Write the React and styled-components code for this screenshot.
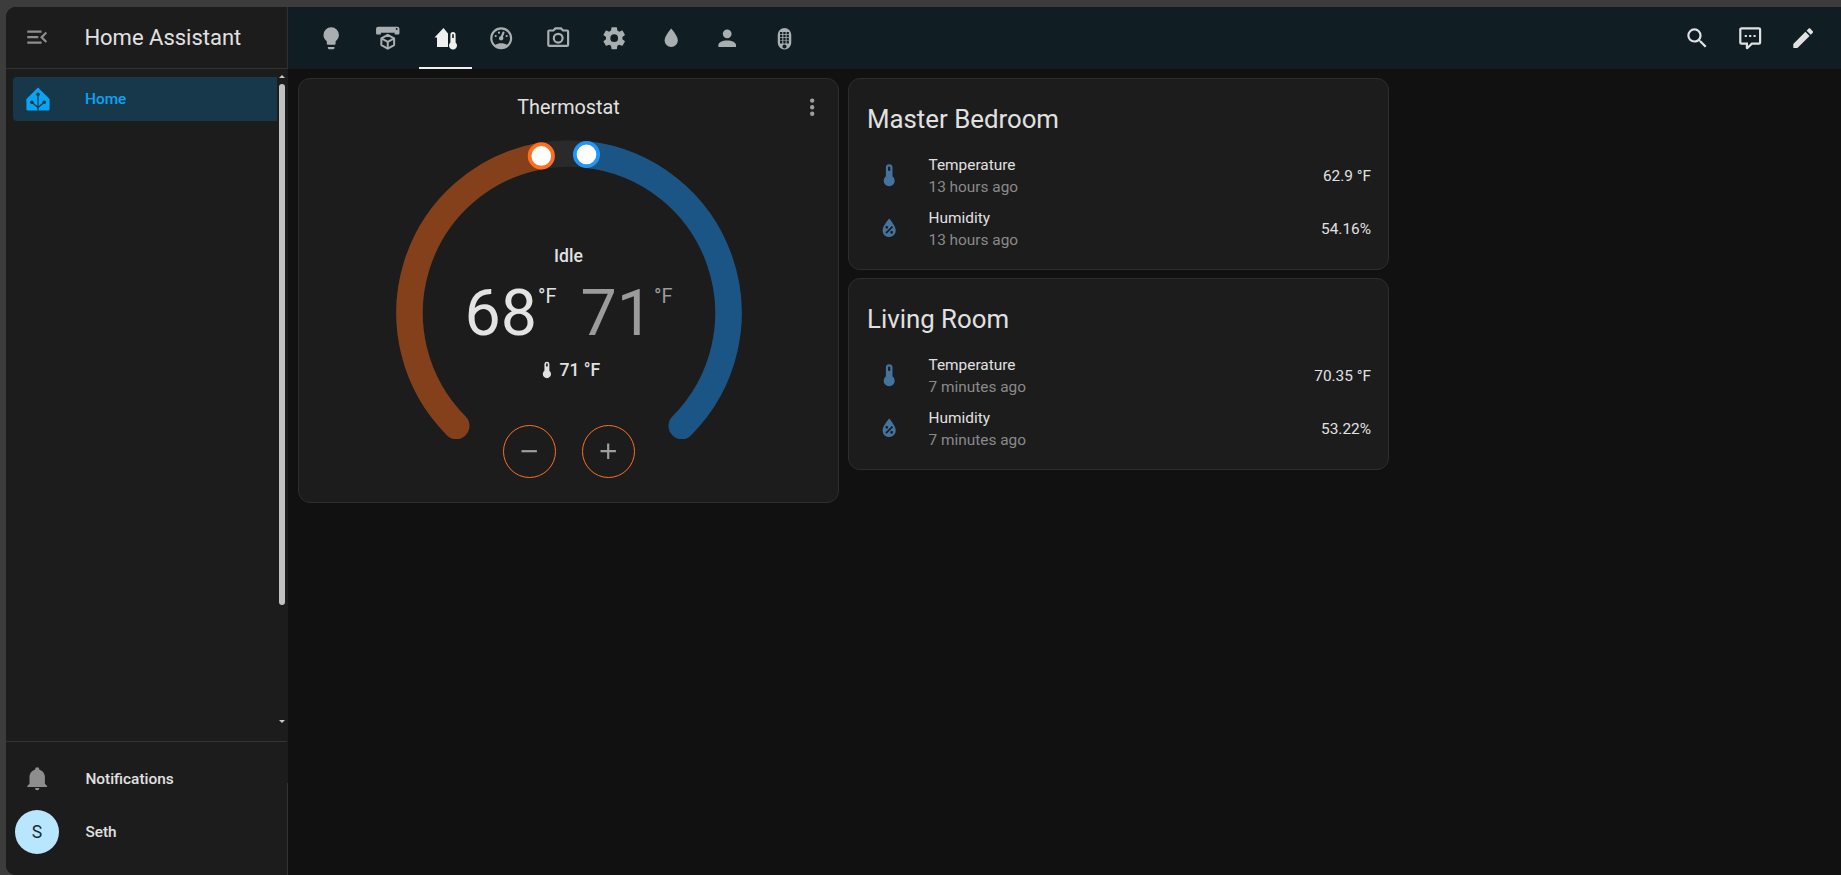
import React from "react";
import styled, { createGlobalStyle } from "styled-components";

const P = {
  lightbulb: "M12,2A7,7 0 0,0 5,9C5,11.38 6.19,13.47 8,14.74V17A1,1 0 0,0 9,18H15A1,1 0 0,0 16,17V14.74C17.81,13.47 19,11.38 19,9A7,7 0 0,0 12,2M9,21A1,1 0 0,0 10,22H14A1,1 0 0,0 15,21V20H9V21Z",
  gauge: "M12,2A10,10 0 0,0 2,12A10,10 0 0,0 12,22A10,10 0 0,0 22,12A10,10 0 0,0 12,2M12,4A8,8 0 0,1 20,12C20,14.4 19,16.5 17.3,18C16,17.2 14.1,16.6 12,16.6C9.9,16.6 8,17.2 6.7,18C5,16.5 4,14.4 4,12A8,8 0 0,1 12,4M14,5.89C13.62,5.9 13.26,6.15 13.1,6.54L11.81,9.77L11.71,10C11,10.13 10.41,10.6 10.14,11.26C9.73,12.29 10.23,13.45 11.26,13.86C12.29,14.27 13.45,13.77 13.86,12.74C14.12,12.08 14,11.32 13.57,10.76L13.67,10.5L14.96,7.29L14.97,7.26C15.17,6.75 14.92,6.17 14.41,5.96C14.28,5.91 14.15,5.89 14,5.89M10,6A1,1 0 0,0 9,7A1,1 0 0,0 10,8A1,1 0 0,0 11,7A1,1 0 0,0 10,6M7,9A1,1 0 0,0 6,10A1,1 0 0,0 7,11A1,1 0 0,0 8,10A1,1 0 0,0 7,9M17,9A1,1 0 0,0 16,10A1,1 0 0,0 17,11A1,1 0 0,0 18,10A1,1 0 0,0 17,9Z",
  camera: "M20,4H16.83L15,2H9L7.17,4H4A2,2 0 0,0 2,6V18A2,2 0 0,0 4,20H20A2,2 0 0,0 22,18V6A2,2 0 0,0 20,4M20,18H4V6H8.05L9.88,4H14.12L15.95,6H20V18M12,7A5,5 0 0,0 7,12A5,5 0 0,0 12,17A5,5 0 0,0 17,12A5,5 0 0,0 12,7M12,15A3,3 0 0,1 9,12A3,3 0 0,1 12,9A3,3 0 0,1 15,12A3,3 0 0,1 12,15Z",
  cog: "M12,15.5A3.5,3.5 0 0,1 8.5,12A3.5,3.5 0 0,1 12,8.5A3.5,3.5 0 0,1 15.5,12A3.5,3.5 0 0,1 12,15.5M19.43,12.97C19.47,12.65 19.5,12.33 19.5,12C19.5,11.67 19.47,11.34 19.43,11L21.54,9.37C21.73,9.22 21.78,8.95 21.66,8.73L19.66,5.27C19.54,5.05 19.27,4.96 19.05,5.05L16.56,6.05C16.04,5.66 15.5,5.32 14.87,5.07L14.5,2.42C14.46,2.18 14.25,2 14,2H10C9.75,2 9.54,2.18 9.5,2.42L9.13,5.07C8.5,5.32 7.96,5.66 7.44,6.05L4.95,5.05C4.73,4.96 4.46,5.05 4.34,5.27L2.34,8.73C2.21,8.95 2.27,9.22 2.46,9.37L4.57,11C4.53,11.34 4.5,11.67 4.5,12C4.5,12.33 4.53,12.65 4.57,12.97L2.46,14.63C2.27,14.78 2.21,15.05 2.34,15.27L4.34,18.73C4.46,18.95 4.73,19.03 4.95,18.95L7.44,17.94C7.96,18.34 8.5,18.68 9.13,18.93L9.5,21.58C9.54,21.82 9.75,22 10,22H14C14.25,22 14.46,21.82 14.5,21.58L14.87,18.93C15.5,18.67 16.04,18.34 16.56,17.94L19.05,18.95C19.27,19.03 19.54,18.95 19.66,18.73L21.66,15.27C21.78,15.05 21.73,14.78 21.54,14.63L19.43,12.97Z",
  water: "M12,20A6,6 0 0,1 6,14C6,10 12,3.25 12,3.25C12,3.25 18,10 18,14A6,6 0 0,1 12,20Z",
  account: "M12,4A4,4 0 0,1 16,8A4,4 0 0,1 12,12A4,4 0 0,1 8,8A4,4 0 0,1 12,4M12,14C16.42,14 20,15.79 20,18V20H4V18C4,15.79 7.58,14 12,14Z",
  magnify: "M9.5,3A6.5,6.5 0 0,1 16,9.5C16,11.11 15.41,12.59 14.44,13.73L14.71,14H15.5L20.5,19L19,20.5L14,15.5V14.71L13.73,14.44C12.59,15.41 11.11,16 9.5,16A6.5,6.5 0 0,1 3,9.5A6.5,6.5 0 0,1 9.5,3M9.5,5C7,5 5,7 5,9.5C5,12 7,14 9.5,14C12,14 14,12 14,9.5C14,7 12,5 9.5,5Z",
  comment: "M9,22A1,1 0 0,1 8,21V18H4A2,2 0 0,1 2,16V4C2,2.89 2.9,2 4,2H20A2,2 0 0,1 22,4V16A2,2 0 0,1 20,18H13.9L10.2,21.71C10,21.9 9.75,22 9.5,22V22H9M10,16V19.08L13.08,16H20V4H4V16H10M17,11H15V9H17V11M13,11H11V9H13V11M9,11H7V9H9V11Z",
  pencil: "M20.71,7.04C21.1,6.65 21.1,6 20.71,5.63L18.37,3.29C18,2.9 17.35,2.9 16.96,3.29L15.12,5.12L18.87,8.87M3,17.25V21H6.75L17.81,9.93L14.06,6.18L3,17.25Z",
  menuOpen: "M21,15.61L19.59,17L14.58,12L19.59,7L21,8.39L17.44,12L21,15.61M3,6H16V8H3V6M3,13V11H13V13H3M3,18V16H16V18H3Z",
  bell: "M21,19V20H3V19L5,17V11C5,7.9 7.03,5.17 10,4.29C10,4.19 10,4.1 10,4A2,2 0 0,1 12,2A2,2 0 0,1 14,4C14,4.1 14,4.19 14,4.29C16.97,5.17 19,7.9 19,11V17L21,19M14,21A2,2 0 0,1 12,23A2,2 0 0,1 10,21",
  thermometer: "M15 13V5A3 3 0 0 0 9 5V13A5 5 0 1 0 15 13M12 4A1 1 0 0 1 13 5V8H11V5A1 1 0 0 1 12 4Z",
  waterPercent: "M12,3.25C12,3.25 6,10 6,14C6,17.32 8.69,20 12,20A6,6 0 0,0 18,14C18,10 12,3.25 12,3.25M14.47,9.97L15.53,11.03L9.53,17.03L8.47,15.97M9.75,10A1.25,1.25 0 0,1 11,11.25A1.25,1.25 0 0,1 9.75,12.5A1.25,1.25 0 0,1 8.5,11.25A1.25,1.25 0 0,1 9.75,10M14.25,14.5A1.25,1.25 0 0,1 15.5,15.75A1.25,1.25 0 0,1 14.25,17A1.25,1.25 0 0,1 13,15.75A1.25,1.25 0 0,1 14.25,14.5Z",
  dots: "M12,16A2,2 0 0,1 14,18A2,2 0 0,1 12,20A2,2 0 0,1 10,18A2,2 0 0,1 12,16M12,10A2,2 0 0,1 14,12A2,2 0 0,1 12,14A2,2 0 0,1 10,12A2,2 0 0,1 12,10M12,4A2,2 0 0,1 14,6A2,2 0 0,1 12,8A2,2 0 0,1 10,6A2,2 0 0,1 12,4Z",
  minus: "M19,13H5V11H19V13Z",
  plus: "M19,13H13V19H11V13H5V11H11V5H13V11H19V13Z",
  homeThermo: "M10.5,2L1.5,11.5H4V21H15V7.5ZM20,6A2.6,2.6 0 0,0 17.4,8.6V16.4A4,4 0 1,0 22.6,16.4V8.6A2.6,2.6 0 0,0 20,6ZM20,8A.8.8 0 0,1 20.8,8.8V12H19.2V8.8A.8.8 0 0,1 20,8Z",
};

const holes = [];
for (let r = 0; r < 4; r++) {
  for (let c = 0; c < 3; c++) {
    const x = 7.7 + c * 3.15;
    const y = 5.8 + r * 2.9;
    holes.push(`M${x.toFixed(2)},${y.toFixed(2)}h2.2v2.2h-2.2Z`);
  }
}
const remotePath =
  "M12,2A6.5,6.5 0 0,1 18.5,8.5V16A6.5,6.5 0 0,1 5.5,16V8.5A6.5,6.5 0 0,1 12,2Z" +
  holes.join("") +
  "M12,17.7A2,2 0 1,0 12,21.7A2,2 0 1,0 12,17.7Z";

const GlobalStyle = createGlobalStyle`
  html, body { margin: 0; height: 100%; background: #3c3c3c; }
  body { font-family: Roboto, "Noto Sans", sans-serif; }
  * { box-sizing: border-box; }
`;

const Screen = styled.div`
  height: 875px;
  width: 1841px;
  padding: 7px 0 0 6px;
  overflow: hidden;
`;
const Shell = styled.div`
  display: flex;
  height: 100%;
  background: #111111;
  border-radius: 10px 0 0 10px;
  overflow: hidden;
`;
const Sidebar = styled.aside`
  width: 281px;
  flex: none;
  display: flex;
  flex-direction: column;
  background: #1c1c1c;
`;
const Edge = styled.div`
  width: 1px;
  flex: none;
  background: linear-gradient(
    to bottom,
    #2f2f2f 0,
    #2f2f2f 62px,
    #1c1c1c 62px,
    #1c1c1c 776px,
    #333333 776px
  );
`;
const BrandBar = styled.div`
  height: 62px;
  flex: none;
  display: flex;
  align-items: center;
  padding-left: 18.4px;
  border-bottom: 1px solid #333333;
`;
const BrandTitle = styled.div`
  margin-left: 33.6px;
  font-size: 22px;
  color: #e1e1e1;
`;
const NavArea = styled.div`
  flex: 1;
  display: flex;
  min-height: 0;
`;
const NavList = styled.nav`
  flex: 1;
  padding: 8px 0 0 7px;
`;
const NavItem = styled.div`
  height: 44px;
  display: flex;
  align-items: center;
  padding-left: 12.5px;
  background: #17384a;
  border-radius: 4px 0 0 4px;
  color: #0aa4f4;
  font-size: 15.4px;
  font-weight: 500;
`;
const NavLabel = styled.span`
  margin-left: 35.5px;
`;
const ScrollTrack = styled.div`
  width: 10px;
  flex: none;
  display: flex;
  flex-direction: column;
  align-items: center;
  padding-top: 6px;
`;
const ScrollUp = styled.div`
  width: 0;
  height: 0;
  border-left: 3px solid transparent;
  border-right: 3px solid transparent;
  border-bottom: 3px solid #c8c8c8;
`;
const ScrollDown = styled.div`
  width: 0;
  height: 0;
  border-left: 3px solid transparent;
  border-right: 3px solid transparent;
  border-top: 3px solid #c8c8c8;
  margin-top: 115px;
`;
const ScrollThumb = styled.div`
  width: 6px;
  height: 521px;
  margin-top: 6px;
  background: #c1c1c1;
  border-radius: 3px;
`;
const Footer = styled.div`
  flex: none;
  border-top: 1px solid #333333;
  padding-top: 10px;
  height: 134px;
`;
const FooterRow = styled.div`
  height: 53px;
  display: flex;
  align-items: center;
  padding-left: ${(p) => p.$pad}px;
  font-size: 15.4px;
  font-weight: 500;
  color: #e1e1e1;
`;
const FooterLabel = styled.span`
  margin-left: ${(p) => p.$gap}px;
`;
const Avatar = styled.div`
  width: 44px;
  height: 44px;
  border-radius: 50%;
  background: #b9e6ff;
  color: #1c2a33;
  font-size: 17.6px;
  font-weight: 400;
  display: flex;
  align-items: center;
  justify-content: center;
`;
const Main = styled.main`
  flex: 1;
  min-width: 0;
  display: flex;
  flex-direction: column;
`;
const TopBar = styled.header`
  height: 62px;
  flex: none;
  display: flex;
  justify-content: space-between;
  background: #101e24;
`;
const Tabs = styled.div`
  display: flex;
  padding-left: 15.2px;
`;
const Tab = styled.div`
  width: 56.6px;
  display: flex;
  align-items: center;
  justify-content: center;
  position: relative;
  color: ${(p) => (p.$active ? "#f0f0f0" : "#a9aeb0")};
  ${(p) =>
    p.$active
      ? `&::after { content: ""; position: absolute; left: 3px; right: 1px; bottom: 0; height: 2px; background: #f0f0f0; }`
      : ""}
`;
const Actions = styled.div`
  display: flex;
  align-items: center;
  gap: 26.6px;
  padding-right: 24.5px;
  color: #e1e1e1;
`;
const Board = styled.div`
  display: grid;
  grid-template-columns: 541px 541px;
  column-gap: 9px;
  padding: 9px 0 0 10px;
  align-items: start;
`;
const Stack = styled.div`
  display: flex;
  flex-direction: column;
  gap: 8px;
`;
const Card = styled.section`
  background: #1c1c1c;
  border: 1px solid #2e2e2e;
  border-radius: 12px;
  position: relative;
`;
const ThermoCard = styled(Card)`
  height: 425px;
  display: flex;
  flex-direction: column;
  align-items: center;
`;
const ThermoTitle = styled.div`
  height: 54px;
  flex: none;
  font-size: 19.8px;
  line-height: 54px;
  padding-top: 2px;
  color: #e1e1e1;
`;
const MenuButton = styled.div`
  position: absolute;
  top: 15px;
  right: 13px;
  color: #9e9e9e;
  display: flex;
`;
const Dial = styled.div`
  position: relative;
  width: 360px;
  height: 360px;
  flex: none;
`;
const DialCenter = styled.div`
  position: absolute;
  left: 0;
  right: 0;
  top: 111px;
  display: flex;
  flex-direction: column;
  align-items: center;
  color: #e1e1e1;
`;
const Mode = styled.div`
  font-size: 17.6px;
  font-weight: 500;
  line-height: 24px;
`;
const Temps = styled.div`
  display: flex;
  gap: 24px;
  margin-top: 8px;
  height: 74px;
`;
const Temp = styled.div`
  display: flex;
  align-items: flex-start;
  color: ${(p) => p.$color};
`;
const TempValue = styled.span`
  font-size: 64.5px;
  font-weight: 400;
  line-height: 74px;
`;
const TempUnit = styled.span`
  font-size: 20px;
  font-weight: 400;
  line-height: 20px;
  margin-top: 10px;
  margin-left: 1px;
`;
const Current = styled.div`
  display: flex;
  align-items: center;
  gap: 3px;
  font-size: 17.6px;
  font-weight: 500;
  line-height: 24px;
  margin-top: 8px;
`;
const DialButtons = styled.div`
  position: absolute;
  left: 0;
  right: 0;
  top: 291.5px;
  display: flex;
  justify-content: center;
  gap: 26px;
`;
const RoundButton = styled.div`
  width: 53px;
  height: 53px;
  border: 1px solid #ff6f22;
  border-radius: 50%;
  display: flex;
  align-items: center;
  justify-content: center;
  color: #9e9e9e;
`;
const EntityCard = styled(Card)`
  height: 192px;
  padding: 0 17px 0 15px;
`;
const EntityTitle = styled.h2`
  margin: 0;
  font-size: 25.8px;
  font-weight: 400;
  color: #e1e1e1;
  line-height: 32px;
  padding: 24px 0 0 3px;
  height: 63px;
`;
const Row = styled.div`
  height: 53px;
  display: flex;
  align-items: center;
  margin-top: ${(p) => (p.$first ? "7px" : "0")};
`;
const Badge = styled.div`
  width: 50px;
  flex: none;
  display: flex;
  justify-content: center;
  color: #44739e;
`;
const RowInfo = styled.div`
  flex: 1;
  margin-left: 14.5px;
  font-size: 15.4px;
  line-height: 22px;
  color: #e1e1e1;
`;
const RowSub = styled.div`
  color: #8a8a8a;
`;
const RowValue = styled.div`
  font-size: 15.4px;
  color: #e1e1e1;
`;

const Icon = ({ d, size = 26.4, color = "currentColor" }) => (
  <svg width={size} height={size} viewBox="0 0 24 24" fill={color} fillRule="evenodd" style={{ display: "block" }}>
    <path d={d} />
  </svg>
);

const PrinterIcon = () => (
  <svg width="25.5" height="25.5" viewBox="0 0 24 24" fill="currentColor" fillRule="evenodd" style={{ display: "block" }}>
    <path d="M3,1.6H21A2,2 0 0,1 23,3.6V8A1,1 0 0,1 22,9H18.5V7.2H5.5V9H2A1,1 0 0,1 1,8V3.6A2,2 0 0,1 3,1.6ZM20.4,2.9A.9.9 0 1,0 20.4,4.7A.9.9 0 1,0 20.4,2.9Z" />
    <g fill="none" stroke="currentColor" strokeWidth="1.9" strokeLinejoin="round">
      <path d="M12,9.2L18,12.6V18.9L12,22.3L6,18.9V12.6Z" />
      <path d="M6.4,12.9L12,15.8L17.6,12.9M12,15.8V22" />
    </g>
  </svg>
);

const HaLogo = () => (
  <svg width="24" height="24" viewBox="0 0 24 24" style={{ display: "block" }}>
    <path fill="#0aa4f4" d="M12,.5L23.6,12V22A1.6,1.6 0 0,1 22,23.6H2A1.6,1.6 0 0,1 .4,22V12Z" />
    <g stroke="#17384a" strokeWidth="1.2" fill="none">
      <path d="M12,7V23.6M12,20.5L6,15.5M12,20.5L18,15.5" />
    </g>
    <g fill="#17384a">
      <circle cx="12" cy="7.2" r="1.8" />
      <circle cx="5.8" cy="15.2" r="1.8" />
      <circle cx="18.2" cy="15.2" r="1.8" />
    </g>
  </svg>
);

const CX = 180;
const CY = 180;
const R = 159.5;
const pt = (deg) => {
  const a = (deg * Math.PI) / 180;
  return [CX + R * Math.sin(a), CY - R * Math.cos(a)];
};
const arc = (from, to) => {
  const [x1, y1] = pt(from);
  const [x2, y2] = pt(to);
  const large = to - from > 180 ? 1 : 0;
  return `M${x1.toFixed(2)} ${y1.toFixed(2)}A${R} ${R} 0 ${large} 1 ${x2.toFixed(2)} ${y2.toFixed(2)}`;
};
const LOW = -10;
const HIGH = 6.3;

const DialArt = () => {
  const [lx, ly] = pt(LOW);
  const [hx, hy] = pt(HIGH);
  return (
    <svg width="360" height="360" viewBox="0 0 360 360" style={{ display: "block" }}>
      <g fill="none" strokeWidth="26.5" strokeLinecap="round">
        <path d={arc(-135, 135)} stroke="#2a2a2a" />
        <path d={arc(-135, LOW)} stroke="#84401a" />
        <path d={arc(HIGH, 135)} stroke="#1a5585" />
      </g>
      <circle cx={lx} cy={ly} r="11.7" fill="#fff" stroke="#ff6f22" strokeWidth="3.7" />
      <circle cx={hx} cy={hy} r="11.7" fill="#fff" stroke="#2196f3" strokeWidth="3.7" />
    </svg>
  );
};

const tabs = [
  { node: <Icon d={P.lightbulb} /> },
  { node: <PrinterIcon /> },
  { node: <Icon d={P.homeThermo} size={24} />, active: true },
  { node: <Icon d={P.gauge} /> },
  { node: <Icon d={P.camera} /> },
  { node: <Icon d={P.cog} /> },
  { node: <Icon d={P.water} /> },
  { node: <Icon d={P.account} /> },
  { node: <Icon d={remotePath} size={25} /> },
];

const rooms = [
  { name: "Master Bedroom", ago: "13 hours ago", temp: "62.9 °F", hum: "54.16%" },
  { name: "Living Room", ago: "7 minutes ago", temp: "70.35 °F", hum: "53.22%" },
];

export default function App() {
  return (
    <>
      <GlobalStyle />
      <Screen>
        <Shell>
          <Sidebar>
            <BrandBar>
              <Icon d={P.menuOpen} color="#8e8e8e" />
              <BrandTitle>Home Assistant</BrandTitle>
            </BrandBar>
            <NavArea>
              <NavList>
                <NavItem>
                  <HaLogo />
                  <NavLabel>Home</NavLabel>
                </NavItem>
              </NavList>
              <ScrollTrack>
                <ScrollUp />
                <ScrollThumb />
                <ScrollDown />
              </ScrollTrack>
            </NavArea>
            <Footer>
              <FooterRow $pad={18.4}>
                <Icon d={P.bell} color="#8e8e8e" />
                <FooterLabel $gap={34.6}>Notifications</FooterLabel>
              </FooterRow>
              <FooterRow $pad={9}>
                <Avatar>S</Avatar>
                <FooterLabel $gap={26.4}>Seth</FooterLabel>
              </FooterRow>
            </Footer>
          </Sidebar>
          <Edge />
          <Main>
            <TopBar>
              <Tabs>
                {tabs.map((t, i) => (
                  <Tab key={i} $active={t.active}>
                    {t.node}
                  </Tab>
                ))}
              </Tabs>
              <Actions>
                <Icon d={P.magnify} />
                <Icon d={P.comment} />
                <Icon d={P.pencil} />
              </Actions>
            </TopBar>
            <Board>
              <ThermoCard>
                <ThermoTitle>Thermostat</ThermoTitle>
                <MenuButton>
                  <Icon d={P.dots} />
                </MenuButton>
                <Dial>
                  <DialArt />
                  <DialCenter>
                    <Mode>Idle</Mode>
                    <Temps>
                      <Temp $color="#e3e3e3">
                        <TempValue>68</TempValue>
                        <TempUnit>°F</TempUnit>
                      </Temp>
                      <Temp $color="#9b9b9b">
                        <TempValue>71</TempValue>
                        <TempUnit>°F</TempUnit>
                      </Temp>
                    </Temps>
                    <Current>
                      <Icon d={P.thermometer} size={19.8} />
                      71 °F
                    </Current>
                  </DialCenter>
                  <DialButtons>
                    <RoundButton>
                      <Icon d={P.minus} />
                    </RoundButton>
                    <RoundButton>
                      <Icon d={P.plus} />
                    </RoundButton>
                  </DialButtons>
                </Dial>
              </ThermoCard>
              <Stack>
                {rooms.map((r) => (
                  <EntityCard key={r.name}>
                    <EntityTitle>{r.name}</EntityTitle>
                    <Row $first>
                      <Badge>
                        <Icon d={P.thermometer} />
                      </Badge>
                      <RowInfo>
                        Temperature
                        <RowSub>{r.ago}</RowSub>
                      </RowInfo>
                      <RowValue>{r.temp}</RowValue>
                    </Row>
                    <Row>
                      <Badge>
                        <Icon d={P.waterPercent} />
                      </Badge>
                      <RowInfo>
                        Humidity
                        <RowSub>{r.ago}</RowSub>
                      </RowInfo>
                      <RowValue>{r.hum}</RowValue>
                    </Row>
                  </EntityCard>
                ))}
              </Stack>
            </Board>
          </Main>
        </Shell>
      </Screen>
    </>
  );
}
